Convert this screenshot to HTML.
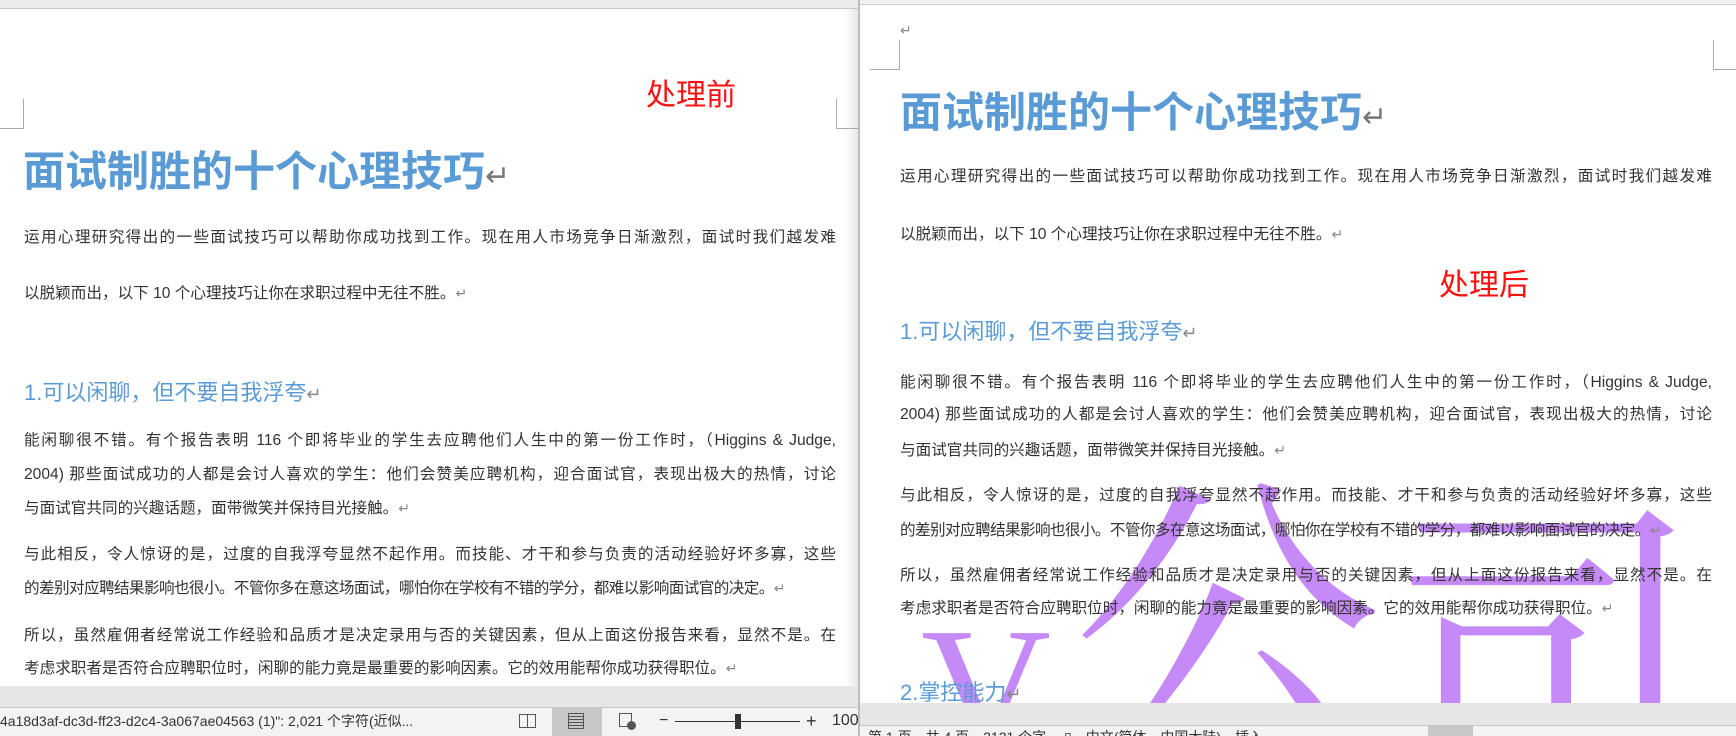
<!DOCTYPE html>
<html style="width:1736px;height:736px;overflow:hidden"><head><meta charset="utf-8"><style>
*{margin:0;padding:0;box-sizing:border-box}
body{width:1736px;height:736px;position:relative;overflow:hidden;background:#fff;font-family:"Liberation Sans","Noto Sans CJK SC",sans-serif;color:#333}
.a{position:absolute;white-space:nowrap}
.l{position:absolute;font-size:15.6px;height:24px;line-height:24px;width:812px;white-space:nowrap}
.j{text-align:justify;text-align-last:justify;white-space:normal}
.t{font-size:42px;font-weight:bold;color:#5b9bd5;line-height:50px;height:50px}
.h{font-size:22px;color:#5b9bd5;line-height:30px;height:30px}
.r{color:#888;font-size:14px}
.rt{color:#777;font-size:30px;font-weight:normal}
.red{color:#ff1010;font-size:30px;line-height:36px}
.wm{position:absolute;color:#c68af8;font-family:"Noto Serif CJK SC","Liberation Serif",serif}
.txt{position:relative;z-index:1}
</style></head><body>
<!-- left panel -->
<div class="a" style="left:0;top:0;width:860px;height:9px;background:#ececec;border-bottom:1px solid #c8c8c8"></div>
<div class="a" style="left:845px;top:9px;width:15px;height:678px;background:linear-gradient(90deg,#fff,#e4e4e4)"></div>
<div class="a" style="left:23px;top:99px;width:1px;height:29px;background:#aaa"></div>
<div class="a" style="left:0;top:128px;width:24px;height:1px;background:#aaa"></div>
<div class="a" style="left:836px;top:99px;width:1px;height:29px;background:#aaa"></div>
<div class="a" style="left:836px;top:128px;width:24px;height:1px;background:#aaa"></div>
<div class="a red" style="left:646px;top:78px">处理前</div>
<div class="l t" style="left:23px;top:147px">面试制胜的十个心理技巧<span class="rt">↵</span></div>
<div class="l j" style="left:24px;top:226px">运用心理研究得出的一些面试技巧可以帮助你成功找到工作。现在用人市场竞争日渐激烈，面试时我们越发难</div>
<div class="l" style="left:24px;top:281px">以脱颖而出，以下 10 个心理技巧让你在求职过程中无往不胜。<span class="r">↵</span></div>
<div class="l h" style="left:24px;top:378px">1.可以闲聊，但不要自我浮夸<span class="r" style="font-size:18px">↵</span></div>
<div class="l j" style="left:24px;top:429px">能闲聊很不错。有个报告表明 116 个即将毕业的学生去应聘他们人生中的第一份工作时，（Higgins &amp; Judge,</div>
<div class="l j" style="left:24px;top:463px">2004) 那些面试成功的人都是会讨人喜欢的学生：他们会赞美应聘机构，迎合面试官，表现出极大的热情，讨论</div>
<div class="l" style="left:24px;top:496px">与面试官共同的兴趣话题，面带微笑并保持目光接触。<span class="r">↵</span></div>
<div class="l j" style="left:24px;top:543px">与此相反，令人惊讶的是，过度的自我浮夸显然不起作用。而技能、才干和参与负责的活动经验好坏多寡，这些</div>
<div class="l" style="left:24px;top:576px;letter-spacing:-0.6px">的差别对应聘结果影响也很小。不管你多在意这场面试，哪怕你在学校有不错的学分，都难以影响面试官的决定。<span class="r">↵</span></div>
<div class="l j" style="left:24px;top:624px">所以，虽然雇佣者经常说工作经验和品质才是决定录用与否的关键因素，但从上面这份报告来看，显然不是。在</div>
<div class="l" style="left:24px;top:656px">考虑求职者是否符合应聘职位时，闲聊的能力竟是最重要的影响因素。它的效用能帮你成功获得职位。<span class="r">↵</span></div>
<div class="a" style="left:0;top:686px;width:860px;height:21px;background:#e6e6e6"></div>
<div class="a" style="left:0;top:707px;width:860px;height:29px;background:#f3f3f3;border-top:1px solid #c6c6c6"></div>
<div class="a" style="left:0;top:711px;font-size:14px;color:#333;line-height:20px">4a18d3af-dc3d-ff23-d2c4-3a067ae04563 (1)": 2,021 个字符(近似...</div>
<div class="a" style="left:552px;top:708px;width:50px;height:28px;background:#c8c8c8"></div>
<div class="a" style="left:519px;top:714px;width:17px;height:14px;border:1px solid #555"></div>
<div class="a" style="left:527px;top:714px;width:1px;height:14px;background:#555"></div>
<div class="a" style="left:568px;top:713px;width:16px;height:16px;border:1px solid #555;background:repeating-linear-gradient(#c8c8c8 0 2px,#555 2px 3px)"></div>
<div class="a" style="left:619px;top:713px;width:13px;height:14px;border:1px solid #555"></div>
<div class="a" style="left:627px;top:721px;width:9px;height:9px;border-radius:50%;background:#555"></div>
<div class="a" style="left:659px;top:711px;font-size:16px;color:#333;line-height:20px">−</div>
<div class="a" style="left:675px;top:721px;width:125px;height:1px;background:#333"></div>
<div class="a" style="left:735px;top:714px;width:6px;height:15px;background:#333"></div>
<div class="a" style="left:806px;top:710px;font-size:18px;color:#333;line-height:22px">+</div>
<div class="a" style="left:832px;top:711px;font-size:16px;color:#333;line-height:20px">100</div>
<div class="a" style="left:858px;top:0;width:2px;height:736px;background:#bdbdbd"></div>

<!-- right panel -->
<div class="a" style="left:860px;top:0;width:876px;height:5px;background:#f0f0f0;border-bottom:1px solid #cfcfcf"></div>
<div class="a r" style="left:900px;top:22px">↵</div>
<div class="a" style="left:899px;top:40px;width:1px;height:29px;background:#aaa"></div>
<div class="a" style="left:870px;top:69px;width:30px;height:1px;background:#aaa"></div>
<div class="a" style="left:1713px;top:40px;width:1px;height:29px;background:#aaa"></div>
<div class="a" style="left:1713px;top:69px;width:23px;height:1px;background:#aaa"></div>

<div class="a" style="left:860px;top:0;width:876px;height:703px;overflow:hidden">
<div class="wm" style="left:61px;top:681px;font-size:180px;line-height:20px;height:20px;font-family:'Liberation Serif',serif">V</div>
<div class="wm" style="left:212px;top:509px;font-size:310px;line-height:190px;height:190px">公</div>
<div class="wm" style="left:530px;top:561px;font-size:310px;line-height:140px;height:140px">司</div>
</div>

<div class="txt">
<div class="l t" style="left:900px;top:88px">面试制胜的十个心理技巧<span class="rt">↵</span></div>
<div class="l j" style="left:900px;top:165px">运用心理研究得出的一些面试技巧可以帮助你成功找到工作。现在用人市场竞争日渐激烈，面试时我们越发难</div>
<div class="l" style="left:900px;top:222px">以脱颖而出，以下 10 个心理技巧让你在求职过程中无往不胜。<span class="r">↵</span></div>
<div class="a red" style="left:1439px;top:268px">处理后</div>
<div class="l h" style="left:900px;top:317px">1.可以闲聊，但不要自我浮夸<span class="r" style="font-size:18px">↵</span></div>
<div class="l j" style="left:900px;top:371px">能闲聊很不错。有个报告表明 116 个即将毕业的学生去应聘他们人生中的第一份工作时，（Higgins &amp; Judge,</div>
<div class="l j" style="left:900px;top:403px">2004) 那些面试成功的人都是会讨人喜欢的学生：他们会赞美应聘机构，迎合面试官，表现出极大的热情，讨论</div>
<div class="l" style="left:900px;top:438px">与面试官共同的兴趣话题，面带微笑并保持目光接触。<span class="r">↵</span></div>
<div class="l j" style="left:900px;top:484px">与此相反，令人惊讶的是，过度的自我浮夸显然不起作用。而技能、才干和参与负责的活动经验好坏多寡，这些</div>
<div class="l" style="left:900px;top:518px;letter-spacing:-0.6px">的差别对应聘结果影响也很小。不管你多在意这场面试，哪怕你在学校有不错的学分，都难以影响面试官的决定。<span class="r">↵</span></div>
<div class="l j" style="left:900px;top:564px">所以，虽然雇佣者经常说工作经验和品质才是决定录用与否的关键因素，但从上面这份报告来看，显然不是。在</div>
<div class="l" style="left:900px;top:596px">考虑求职者是否符合应聘职位时，闲聊的能力竟是最重要的影响因素。它的效用能帮你成功获得职位。<span class="r">↵</span></div>
<div class="l h" style="left:900px;top:678px">2.掌控能力<span class="r" style="font-size:18px">↵</span></div>
</div>
<div class="a" style="left:860px;top:703px;width:876px;height:22px;background:#e6e6e6;z-index:2"></div>
<div class="a" style="left:860px;top:725px;width:876px;height:11px;background:#f3f3f3;border-top:1px solid #c6c6c6;z-index:2;overflow:hidden">
<div class="a" style="left:8px;top:0;height:10px;font-size:14px;color:#333;line-height:22px">第 1 页，共 4 页　2121 个字　 ▯　中文(简体，中国大陆)　插入</div>
<div class="a" style="left:568px;top:0;width:45px;height:10px;background:#c8c8c8"></div>
</div>
</body></html>
